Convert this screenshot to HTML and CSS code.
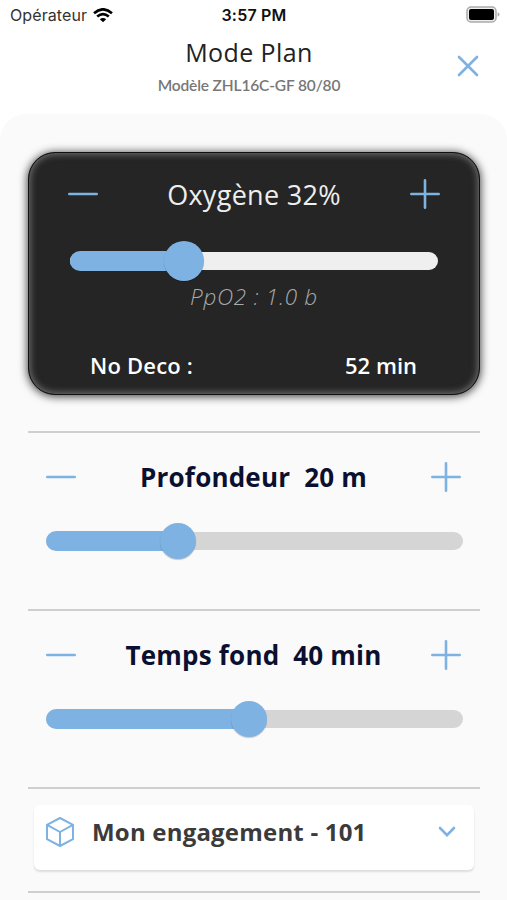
FILE: index.html
```html
<!DOCTYPE html>
<html lang="fr">
<head>
<meta charset="utf-8">
<title>Mode Plan</title>
<link rel="stylesheet" href="styles.css">
</head>
<body>
<div class="status">
  <div class="carrier"><span class="carrier-name">Opérateur</span>
    <svg width="20" height="15" viewBox="0 0 20 15" fill="none" stroke="#000" stroke-width="2.6"><path d="M1 5.2Q10-2.6 19 5.2M4.2 8.6q5.8-5 11.6 0"/><path d="M10 14.3 6.8 11.2q3.2-2.6 6.4 0Z" fill="#000" stroke="none"/></svg>
  </div>
  <div class="clock">3:57 PM</div>
  <svg class="battery" width="34" height="17" viewBox="0 0 34 17"><rect x="1" y="1" width="29" height="15" rx="4" fill="#eee" stroke="#aaa" stroke-width="1.5"/><rect x="3" y="3" width="25" height="11" rx="2" fill="#000"/><path d="M31.6 6.3q1.9.6 1.9 2.2t-1.9 2.2Z" fill="#aaa"/></svg>
</div>
<header class="header">
  <div></div>
  <div class="heading"><h1><span class="title">Mode Plan</span></h1><p><span class="model">Modèle ZHL16C-GF 80/80</span></p></div>
  <svg class="close" width="22" height="22" viewBox="0 0 22 22"><path class="line" d="M2 2 20 20M20 2 2 20"/></svg>
</header>
<main class="panel">
  <section class="card">
    <div class="row">
      <svg width="30" height="30" viewBox="0 0 30 30"><path class="line" d="M1.3 15H28.7"/></svg>
      <span class="gas">Oxygène 32%</span>
      <svg width="30" height="30" viewBox="0 0 30 30"><path class="line" d="M1.3 15H28.7M15 1.3V28.7"/></svg>
    </div>
    <div class="slider light"><div class="fill" style="width:114px"></div><div class="thumb" style="left:114px"></div></div>
    <div class="ppo"><span class="ppo-text">PpO2 : 1.0 b</span></div>
    <div class="deco"><span class="deco-label">No Deco :</span><span class="deco-value">52 min</span></div>
  </section>
  <section class="setting">
    <div class="row">
      <svg width="30" height="30" viewBox="0 0 30 30"><path class="line" d="M1.3 15H28.7"/></svg>
      <span class="depth">Profondeur  20 m</span>
      <svg width="30" height="30" viewBox="0 0 30 30"><path class="line" d="M1.3 15H28.7M15 1.3V28.7"/></svg>
    </div>
    <div class="slider"><div class="fill" style="width:132px"></div><div class="thumb" style="left:132px"></div></div>
  </section>
  <section class="setting">
    <div class="row">
      <svg width="30" height="30" viewBox="0 0 30 30"><path class="line" d="M1.3 15H28.7"/></svg>
      <span class="time">Temps fond  40 min</span>
      <svg width="30" height="30" viewBox="0 0 30 30"><path class="line" d="M1.3 15H28.7M15 1.3V28.7"/></svg>
    </div>
    <div class="slider"><div class="fill" style="width:203px"></div><div class="thumb" style="left:203px"></div></div>
  </section>
  <section class="last">
    <div class="select">
      <svg width="30" height="32" viewBox="0 0 30 32"><path class="cube" d="M15 2 28 8.8V23.2L15 30 2 23.2V8.8ZM2 8.8 15 16 28 8.8M15 16V30"/></svg>
      <span class="gear">Mon engagement - 101</span>
      <svg class="chevron" width="18" height="12" viewBox="0 0 18 12"><path class="line" d="M2 2 9 9.2 16 2"/></svg>
    </div>
  </section>
  <div class="end"></div>
</main>
</body>
</html>
```
FILE: styles.css
```css
* { box-sizing: border-box; }
body { margin: 0; height: 900px; overflow: hidden; background: #fff; font-family: "Open Sans", sans-serif; color: #222; }
svg { display: block; flex: none; }
span { white-space: pre; }
.line { fill: none; stroke: #7db2e3; stroke-width: 2.6; stroke-linecap: round; }
.status { height: 30px; padding: 0 7px 0 10px; display: grid; grid-template-columns: 1fr auto 1fr; align-items: center; font-family: Inter, sans-serif; font-size: 16px; }
.carrier { display: flex; align-items: center; gap: 6px; color: #333; letter-spacing: .1px; }
.clock { font-weight: 600; color: #111; letter-spacing: .2px; margin-left: -2px; }
.battery { justify-self: end; margin-top: -1px; }
.header { height: 84px; display: grid; grid-template-columns: 1fr auto 1fr; padding: 0 28px 0 19px; }
.heading { text-align: center; }
h1 { margin: 4px 0 0; font-size: 25px; line-height: 36px; font-weight: 400; letter-spacing: .4px; }
p { margin: 5px 0 0; font: 600 15.5px/20px Lato, sans-serif; color: #777; }
.model { letter-spacing: -.15px; }
.close { justify-self: end; margin-top: 25px; }
.panel { height: 786px; padding: 38px 27px 0 28px; background: #fafafa; border-radius: 26px 26px 0 0; }
.card { height: 243px; border: 1px solid #111; border-radius: 27px; background: #252525; color: #fff; box-shadow: 0 1px 8px 1px rgba(0,0,0,.7), inset 0 0 7px 1px #777; }
.row { height: 82px; display: flex; align-items: center; justify-content: space-between; padding: 0 39px; }
.gas { font-size: 27px; letter-spacing: .3px; color: #eee; }
.slider { position: relative; height: 18px; border-radius: 9px; background: #d5d5d5; margin: 20px 17px 0 18px; }
.fill { position: absolute; left: 0; top: -1px; height: 20px; border-radius: 10px; background: #7eb2e3; }
.thumb { position: absolute; top: -9px; width: 36px; height: 36px; margin-left: -18px; border-radius: 50%; background: #7eb2e3; box-shadow: 0 1px 1px rgba(0,0,0,.2); }
.light { background: #efefef; margin: 17px 41px 0; }
.light .thumb { top: -11px; width: 40px; height: 40px; margin-left: -20px; }
.ppo { margin-top: 10px; text-align: center; font-size: 22.5px; letter-spacing: .7px; line-height: 34px; font-style: italic; font-weight: 300; color: #aaa; }
.deco { margin-top: 35px; padding: 0 62px 0 61px; display: flex; justify-content: space-between; font-size: 22px; font-weight: 600; line-height: 32px; }
.deco-label { letter-spacing: .2px; }
.setting { height: 178px; border-top: 2px solid #cfcfcf; }
.card + .setting { margin-top: 36px; }
.setting .row { height: 88px; padding: 0 19px 0 18px; font-size: 26px; letter-spacing: .2px; font-weight: 700; color: #0b1030; }
.setting .slider { margin-top: 11px; }
.last { height: 104px; padding: 16px 6px; border-top: 2px solid #cfcfcf; }
.select { height: 65px; display: flex; align-items: center; background: #fff; border-radius: 6px; padding: 0 18px 12px 11px; box-shadow: 0 2px 2px #ddd; }
.cube { fill: none; stroke: #7db2e3; stroke-width: 2; stroke-linejoin: round; }
.gear { margin-left: 17px; font-size: 24px; letter-spacing: .2px; font-weight: 700; color: #3b3b3b; }
.chevron { margin-left: auto; }
.end { height: 2px; background: #cfcfcf; }
```
